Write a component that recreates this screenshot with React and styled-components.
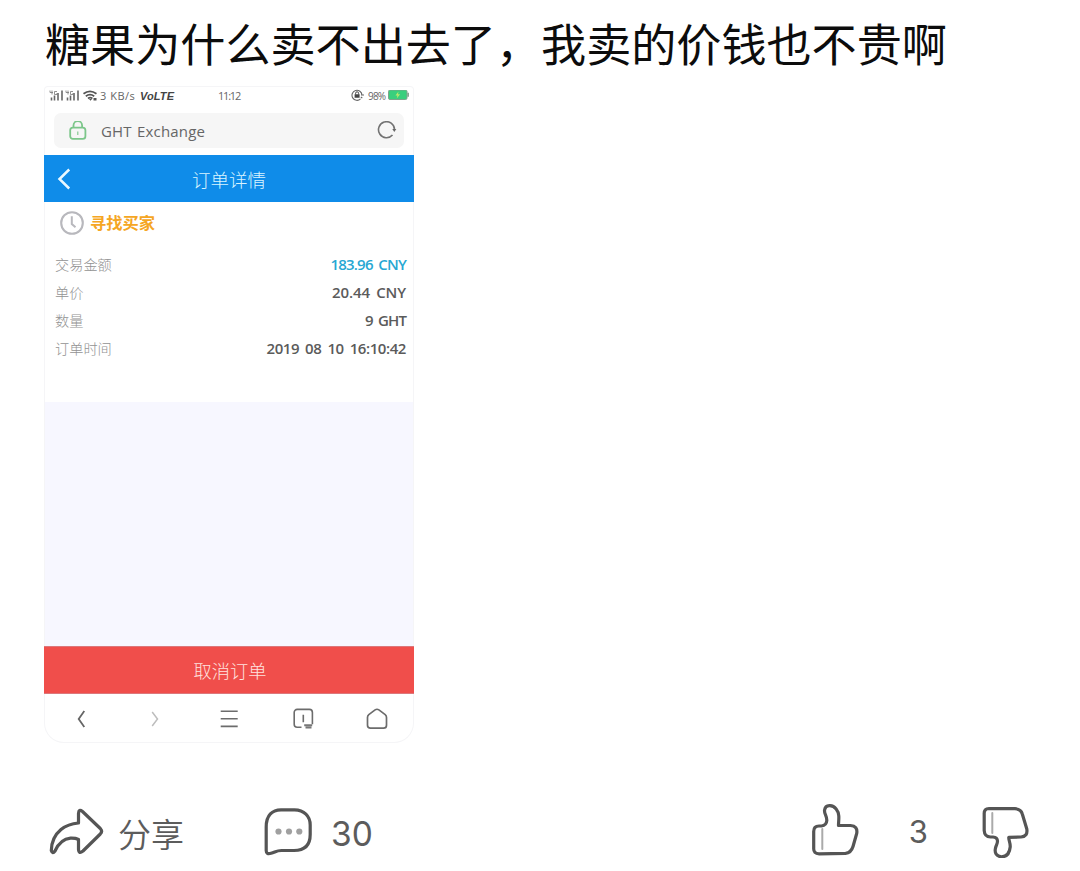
import React from "react";
import styled, { createGlobalStyle } from "styled-components";

const details = [
    { label: "交易金额", value: "183.96 CNY", color: "#27a7d3" },
    { label: "单价", value: "20.44 CNY", spacing: "-0.1px" },
    { label: "数量", value: "9 GHT", spacing: "-0.9px" },
    { label: "订单时间", value: "2019 08 10 16:10:42", spacing: "-0.42px" },
];

const StatusBar = () => (
    <StatusWrapper>
        <svg width="48" height="14" viewBox="49 89.5 48 14" fill="none">
            {[0, 16].map((x) => (
                <g key={x} transform={`translate(${x} 0)`}>
                    <path
                        d="M51.5 98v3M54.5 96v5M58 93.5v7.5M62 91v10"
                        stroke="#666"
                        strokeWidth="1.6"
                    />
                    <path
                        d="M50 91v2h3M52 91v4M57 92h-2.5v3H57v-1.5"
                        stroke="#777"
                        strokeWidth="0.8"
                    />
                </g>
            ))}
            <path
                d="M83.5 94.2q6.5-4.8 13 0M85.8 96.7q4.2-3 8.4 0M88 99q2.2-1.6 4.4 0"
                stroke="#555"
                strokeWidth="1.8"
            />
            <path d="M89 99.5h3l-1.5 1.8zM93.5 98.5h3v2.5h-3z" fill="#555" />
        </svg>
        <Speed>3 KB/s</Speed>
        <Volte>VoLTE</Volte>
        <Clock>11:12</Clock>
        <svg width="13" height="13" viewBox="0 0.5 13 13" fill="none">
            <path
                d="M9.5 10.4A5 5 0 1 1 11 6.5M10 6.5h3M9.8 8.5l1.5 1"
                stroke="#666"
                strokeWidth="1.1"
            />
            <path d="M4.6 6V4.8a1.5 1.5 0 0 1 3 0V6" stroke="#444" />
            <path d="M3.6 5.8h5v3.5h-5z" fill="#444" />
        </svg>
        <Percent>98%</Percent>
        <svg width="21" height="11" viewBox="0 0.5 21 11">
            <rect x="0.5" y="0.5" width="18.5" height="9.5" rx="1.5" fill="#39cf7d" stroke="#7fa28c" />
            <path d="M19.5 3.2h1.3v4h-1.3z" fill="#6a8d77" />
            <path d="M10.5 2L7.5 6h2l-.8 3 3.4-4.3H10z" fill="#b9e96b" />
        </svg>
    </StatusWrapper>
);

const AddressBar = () => (
    <AddressWrapper>
        <svg width="18" height="20" viewBox="0 1 18 20" fill="none" stroke="#7cc68a" strokeWidth="1.8">
            <rect x="1.2" y="7.6" width="15.2" height="11.2" rx="2.6" />
            <path d="M4.5 7.5V5.4a4.3 4.3 0 0 1 8.6 0v2.1" />
            <path d="M8.8 11.5v3.5" strokeWidth="1.1" />
        </svg>
        <Address>GHT Exchange</Address>
        <svg width="20" height="19" viewBox="0 0.5 20 19" fill="none">
            <path d="M15.5 14.5A8 8 0 1 1 17.5 9" stroke="#737373" strokeWidth="1.6" />
            <path d="M15.3 8.6h4l-2 2.8z" fill="#666" />
        </svg>
    </AddressWrapper>
);

const BrowserNav = () => (
    <NavWrapper>
        <svg width="24" height="24" viewBox="0 0 24 24" stroke="#666" strokeWidth="1.8">
            <path d="M15.3 4L9.7 12l5.6 8" />
        </svg>
        <svg width="24" height="24" viewBox="0 0 24 24" stroke="#bdbdbd" strokeWidth="1.5">
            <path d="M9.2 5l5.3 7-5.3 7" />
        </svg>
        <svg width="24" height="24" viewBox="0 0 24 24" stroke="#6c6c6c" strokeWidth="1.6">
            <path d="M3.7 4.2h17M3.7 11.8h17M3.7 19.4h17" />
        </svg>
        <svg width="24" height="24" viewBox="0 0 24 24" stroke="#6c6c6c" strokeWidth="1.6">
            <path d="M10.5 20.3H6.2a3 3 0 0 1-3-3V5.4a3 3 0 0 1 3-3h12.2a3 3 0 0 1 3 3v11.8" />
            <path d="M12.3 7.8v7.5" />
            <path d="M13.2 18.2h8M14.5 20.5h6" strokeWidth="1.9" stroke="#777" />
        </svg>
        <svg width="24" height="24" viewBox="0 0 24 24" stroke="#6c6c6c" strokeWidth="1.7">
            <path d="M2.5 10.4q0-1.8 1.3-2.8l6.3-4.7q1.9-1.3 3.8 0l6.3 4.7Q21.5 8.6 21.5 10.4v7.8q0 3-3 3H5.5q-3 0-3-3z" />
        </svg>
    </NavWrapper>
);

const App = () => {
    return (
        <>
            <GlobalStyle />
            <Post>
                <Title>糖果为什么卖不出去了，我卖的价钱也不贵啊</Title>
                <Phone>
                    <StatusBar />
                    <AddressBar />
                    <PageHeader>
                        <svg width="14" height="22" viewBox="0 0 14 22" fill="none">
                            <path d="M12.2 1.5L2.5 11l9.7 9.5" stroke="#e9f8ff" strokeWidth="2.5" />
                        </svg>
                        <PageTitle>订单详情</PageTitle>
                    </PageHeader>
                    <Order>
                        <OrderState>
                            <svg width="24" height="24" viewBox="0 0 24 24" fill="none" stroke="#b8b8bd">
                                <circle cx="12" cy="12" r="10.8" strokeWidth="2.1" />
                                <path d="M11.8 5.2V13l3.7 3.2" strokeWidth="2" />
                            </svg>
                            <StateText>寻找买家</StateText>
                        </OrderState>
                        {details.map((item) => (
                            <Row key={item.label}>
                                <Label>{item.label}</Label>
                                <Value $color={item.color} $spacing={item.spacing}>
                                    {item.value}
                                </Value>
                            </Row>
                        ))}
                    </Order>
                    <Blank />
                    <CancelButton>取消订单</CancelButton>
                    <BrowserNav />
                </Phone>
                <Actions>
                    <Action $gap="14px">
                        <Icon width="56" height="50" viewBox="48.5 806 56 50">
                            <path d="M79 823V813.5Q79.2 808.5 83 811.5L100.8 828.5Q103.4 831.3 100.8 834L83.5 851Q79.3 854.5 79 849.5V839.5Q76 838 71 838.2C62.5 839 58.5 844.500 55.5 851Q53 854.5 51.8 850.5C52 842 55.5 834.500 61.5 829.5C67 825 72.5 823.500 79 823Z" />
                        </Icon>
                        <ActionText>分享</ActionText>
                    </Action>
                    <Action $gap="18px" $left="79px">
                        <Icon width="50" height="50" viewBox="263 806 50 50">
                            <path d="M266.200 827C266.200 815 272.500 810 281 809.800H294.500C304 810 310.200 816 310.200 825V834.500C310.200 845.500 304 850.500 294 850.500H281.500C276.500 850.500 275.500 852 271 853.300Q266.200 854.800 266.200 850.500Z" />
                            <g fill="#a0a0a0" stroke="none">
                                <circle cx="278.5" cy="831.5" r="3.1" />
                                <circle cx="289" cy="831.5" r="3.1" />
                                <circle cx="299.3" cy="831.5" r="3.1" />
                            </g>
                        </Icon>
                        <Count $size="33.5px">30</Count>
                    </Action>
                    <Votes>
                        <Icon width="50" height="54" viewBox="809 804 50 54">
                            <path d="M818 826H820.5Q825.5 825.5 825.8 820.5C826 816 823.3 814.5 823.5 810.5C824 806.8 826.5 805.5 829 805.7C834 806 837.5 811 837.8 816C838 819.5 837.5 822 837.5 825.5H849.5Q857 826 855.7 833.5L852 846.500Q850 853 844.500 853.300L818 853.800Q812.5 853.800 812.7 848.5V831.5Q812.7 826 818 826Z" />
                            <path d="M821.3 829v20" stroke="#aaa" strokeWidth="2" />
                        </Icon>
                        <Count $size="31px">3</Count>
                        <Icon width="50" height="54" viewBox="981 804.500 50 54">
                            <path d="M989 809L1015 809.2Q1021 809.5 1022.3 814.5L1026.8 829.5Q1028 837 1021 837.5L1008.8 837.8C1008.5 841 1010.5 843 1010.2 847.5C1009.5 854 1006 857.3 1001.5 857.3C996.5 857 994.3 853.5 995.5 848.5C996.3 845.5 997.5 844.5 997.5 841.5Q997.3 837.8 993 837.5H990.5Q984.5 837.3 984.2 831V814.5Q984 809 989 809Z" />
                            <path d="M992.3 813.5v20" stroke="#aaa" strokeWidth="2" />
                        </Icon>
                    </Votes>
                </Actions>
            </Post>
        </>
    );
};

export default App;

const GlobalStyle = createGlobalStyle`
    * {
        box-sizing: border-box;
    }
    body {
        margin: 0;
        background-color: #fff;
        font-family: "Open Sans", "Noto Sans CJK SC", sans-serif;
    }
    svg {
        display: block;
        flex-shrink: 0;
    }
`;
const Post = styled.div`
    width: 1080px;
    height: 871px;
    padding: 13px 0 0 44px;
    overflow: hidden;
`;
const Title = styled.div`
    height: 73px;
    padding-left: 1px;
    font-family: "Noto Sans CJK SC", sans-serif;
    font-size: 45.1px;
    line-height: 59px;
    color: #0c0c0c;
    white-space: nowrap;
`;
const Phone = styled.div`
    width: 370px;
    height: 657px;
    display: flex;
    flex-direction: column;
    border-radius: 4px 4px 20px 20px;
    box-shadow: inset 0 0 0 1px #f5f5f7;
    overflow: hidden;
`;
const StatusWrapper = styled.div`
    height: 19px;
    display: flex;
    align-items: center;
    padding-left: 5px;
    font-size: 11px;
    color: #666;
    white-space: nowrap;
`;
const Speed = styled.div`
    width: 38px;
    margin-left: 3px;
    letter-spacing: 0.5px;
`;
const Volte = styled.div`
    width: 40px;
    margin-left: 2px;
    font-family: "Liberation Sans", sans-serif;
    font-weight: 700;
    font-style: italic;
    letter-spacing: 0.1px;
    color: #444;
`;
const Clock = styled.div`
    width: 26px;
    margin: 0 107px 0 38px;
    font-size: 11px;
    letter-spacing: -1.2px;
`;
const Percent = styled.div`
    width: 20px;
    margin: 0 0 0 4px;
    font-size: 10px;
    letter-spacing: -0.8px;
`;
const AddressWrapper = styled.div`
    height: 35px;
    display: flex;
    align-items: center;
    margin: 8px 10px 7px;
    padding: 0 7px 0 15px;
    border-radius: 7px;
    background-color: #f6f6f6;
`;
const Address = styled.div`
    flex: 1;
    margin-left: 14px;
    font-size: 15px;
    letter-spacing: 0.2px;
    word-spacing: 1px;
    color: #666;
`;
const PageHeader = styled.div`
    height: 47px;
    display: flex;
    align-items: center;
    padding: 0 14px 0 13px;
    background-color: #0f8ce9;
`;
const PageTitle = styled.div`
    flex: 1;
    padding-right: 13px;
    text-align: center;
    font-size: 18.5px;
    font-weight: 300;
    color: #d9f4ff;
`;
const Order = styled.div`
    height: 200px;
    padding: 9px 8px 0 11px;
`;
const OrderState = styled.div`
    height: 39px;
    display: flex;
    align-items: flex-start;
    gap: 6px;
    padding-left: 5px;
`;
const StateText = styled.div`
    font-size: 16.3px;
    font-weight: 700;
    line-height: 24px;
    color: #f5a623;
`;
const Row = styled.div`
    height: 28px;
    display: flex;
    align-items: center;
    justify-content: space-between;
`;
const Label = styled.div`
    font-size: 14.2px;
    font-weight: 300;
    color: #929292;
`;
const Value = styled.div`
    font-size: 15px;
    font-weight: 600;
    letter-spacing: ${(props) => props.$spacing || "-0.8px"};
    word-spacing: 2.5px;
    color: ${(props) => props.$color || "#5b5b5b"};
`;
const Blank = styled.div`
    height: 244px;
    margin: 0 1px;
    background-color: #f7f7ff;
`;
const CancelButton = styled.div`
    height: 48px;
    padding-left: 2px;
    border: solid #dc777b;
    border-width: 1px 0;
    text-align: center;
    font-size: 18.3px;
    font-weight: 300;
    line-height: 47px;
    color: #ffe1df;
    background-color: #f04e4b;
`;
const NavWrapper = styled.div`
    flex: 1;
    display: flex;
    align-items: center;
    justify-content: space-between;
    padding: 1px 25px 0;
    fill: none;
`;
const Actions = styled.div`
    display: flex;
    align-items: center;
    height: 56px;
    margin-top: 60px;
    padding: 0 49px 0 4px;
    color: #5c5c5c;
`;
const Action = styled.div`
    display: flex;
    align-items: center;
    gap: ${(props) => props.$gap};
    margin-left: ${(props) => props.$left || 0};
`;
const ActionText = styled.div`
    padding-top: 3px;
    font-family: "Noto Sans CJK SC", sans-serif;
    font-size: 33px;
    font-weight: 350;
    line-height: 48px;
`;
const Votes = styled.div`
    flex: 1;
    display: flex;
    align-items: center;
    justify-content: flex-end;
`;
const Count = styled.div`
    padding-top: 5px;
    font-family: Inter, "Liberation Sans", sans-serif;
    font-size: ${(props) => props.$size};
    font-weight: 400;
    line-height: 48px;

    ${Votes} & {
        padding-top: 2px;
        margin: 0 53px 0 49px;
    }
`;
const Icon = styled.svg`
    fill: none;
    stroke: #555;
    stroke-width: 3.2;
    stroke-linejoin: round;
    stroke-linecap: round;
`;
